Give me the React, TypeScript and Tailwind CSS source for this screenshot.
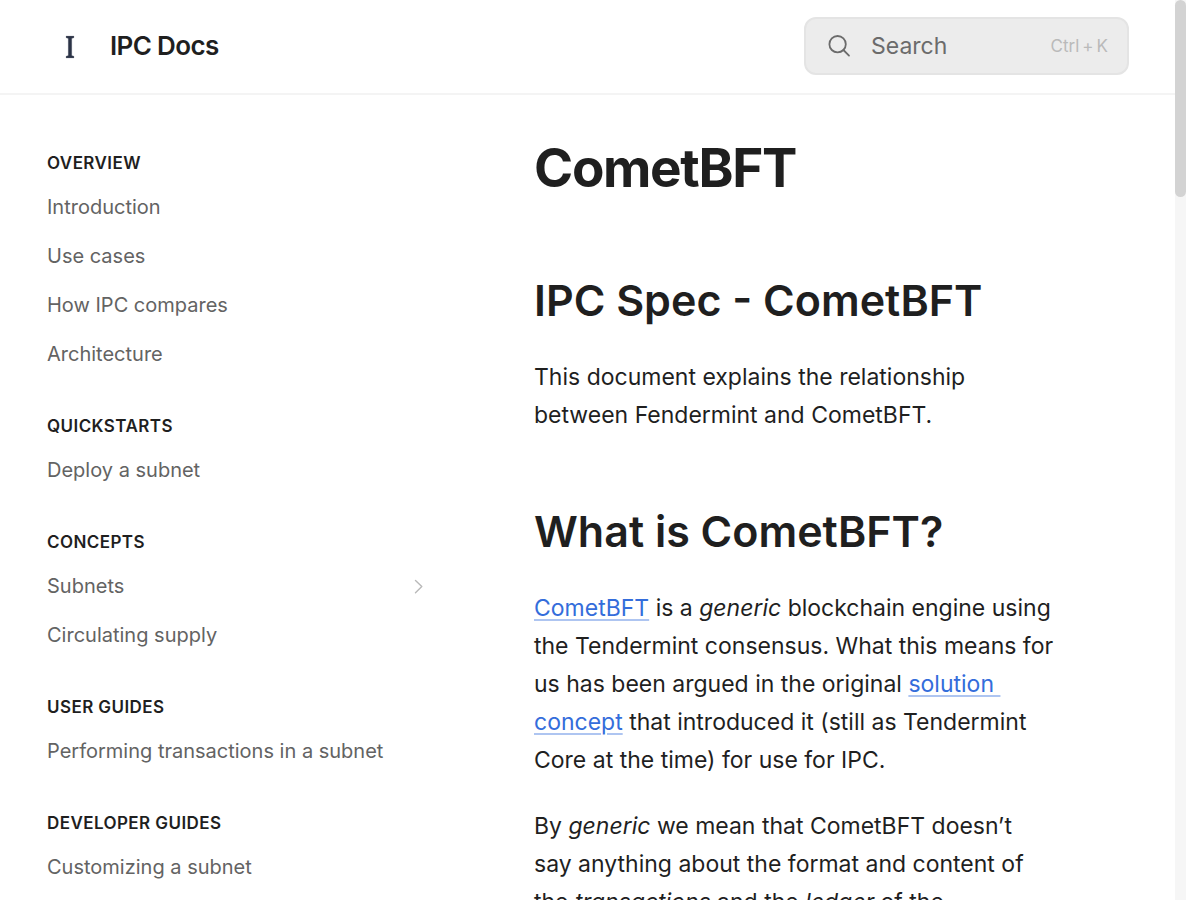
import React from "react";

type NavItem = { label: string; expandable?: boolean };
type NavGroup = { title: string; items: NavItem[] };

const groups: NavGroup[] = [
  {
    title: "Overview",
    items: [
      { label: "Introduction" },
      { label: "Use cases" },
      { label: "How IPC compares" },
      { label: "Architecture" },
    ],
  },
  { title: "Quickstarts", items: [{ label: "Deploy a subnet" }] },
  {
    title: "Concepts",
    items: [{ label: "Subnets", expandable: true }, { label: "Circulating supply" }],
  },
  { title: "User guides", items: [{ label: "Performing transactions in a subnet" }] },
  { title: "Developer guides", items: [{ label: "Customizing a subnet" }] },
];

function Logo() {
  return (
    <svg viewBox="0 0 46 46" className="size-[46px]" aria-hidden="true">
      <path
        d="M19 13h8v1.8l-2.2.6v17.2l2.2.6V35h-8v-1.8l2.2-.6V15.4l-2.2-.6z"
        fill="#2b3346"
        stroke="#8b8f99"
        strokeOpacity="0.35"
        strokeWidth="0.8"
      />
    </svg>
  );
}

function SearchIcon() {
  return (
    <svg viewBox="0 0 24 24" className="size-6" fill="none" stroke="#6b6b6b" strokeWidth="1.8" aria-hidden="true">
      <circle cx="10.6" cy="10.2" r="8.2" />
      <path d="M16.4 16l5.6 5.6" strokeLinecap="round" />
    </svg>
  );
}

function Chevron() {
  return (
    <svg viewBox="0 0 16 16" className="size-4" fill="none" stroke="#b9b9b9" strokeWidth="1.4" aria-hidden="true">
      <path d="M4.5 1.4 10.8 7.6l-6.3 6.2" strokeLinecap="round" strokeLinejoin="round" />
    </svg>
  );
}

function Header() {
  return (
    <header className="flex h-[95px] shrink-0 items-center justify-between border-b-2 border-[#f4f4f4] pr-[46px] pb-0.5 pl-[47px]">
      <a href="#" className="flex items-center gap-[17px] text-[26px] leading-8 font-semibold tracking-tight">
        <Logo />
        IPC Docs
      </a>
      <button
        type="button"
        className="flex h-[58px] w-[325px] items-center rounded-xl border-2 border-[#e4e4e4] bg-[#ececec] pr-[19px] pl-[21px] text-left"
      >
        <SearchIcon />
        <span className="ml-5 flex-1 text-[23px] leading-8 text-[#6b6b6b]">Search</span>
        <span className="flex gap-[3px] text-[17px] leading-6 text-[#bababa]">
          <span>Ctrl</span>
          <span>+</span>
          <span>K</span>
        </span>
      </button>
    </header>
  );
}

function Sidebar() {
  return (
    <nav aria-label="Documentation" className="flex w-[396px] shrink-0 flex-col gap-[30px] pt-[51px]">
      {groups.map((group) => (
        <section key={group.title}>
          <h2 className="mb-[3px] text-[17px] leading-[34px] font-semibold tracking-wide uppercase">{group.title}</h2>
          <ul>
            {group.items.map((item) => (
              <li key={item.label}>
                <a href="#" className="flex items-center justify-between py-[9px] pr-4 text-[20px] leading-[31px] text-[#636363]">
                  {item.label}
                  {item.expandable && <Chevron />}
                </a>
              </li>
            ))}
          </ul>
        </section>
      ))}
    </nav>
  );
}

function TextLink({ children }: { children: React.ReactNode }) {
  return (
    <a
      href="#"
      className="text-[#346ddb] underline decoration-[#aec5f1] decoration-2 underline-offset-[3px]"
    >
      {children}
    </a>
  );
}

function Article() {
  return (
    <main className="min-w-0 flex-1 pt-[43px] pr-[70px] pl-[91px] text-[23px] leading-[38px]">
      <h1 className="text-[53px] leading-[60px] font-bold tracking-tight">CometBFT</h1>
      <h2 className="mt-[74px] text-[43px] leading-[56px] font-semibold">IPC Spec - CometBFT</h2>
      <p className="mt-[30px]">This document explains the relationship between Fendermint and CometBFT.</p>
      <h2 className="mt-[69px] text-[43px] leading-[56px] font-semibold">What is CometBFT?</h2>
      <p className="mt-[30px]">
        <TextLink>CometBFT</TextLink> is a <em>generic</em> blockchain engine using the Tendermint
        consensus. What this means for us has been argued in the original{" "}
        <TextLink>{"solution\u00a0 concept"}</TextLink> that introduced it (still as Tendermint Core
        at the time) for use for IPC.
      </p>
      <p className="mt-7">
        By <em>generic</em> we mean that CometBFT doesn’t {"say\u00a0anything"} about the format and
        content of the <em>transactions</em> and the <em>ledger</em> of the
      </p>
    </main>
  );
}

export default function App() {
  return (
    <div className="flex h-screen overflow-hidden bg-white font-['Inter',sans-serif] text-[#1f1f1f]">
      <div className="flex min-w-0 flex-1 flex-col">
        <Header />
        <div className="flex min-h-0 flex-1 overflow-hidden pr-[46px] pl-[47px]">
          <Sidebar />
          <Article />
        </div>
      </div>
      <div className="w-[11px] shrink-0 bg-[#f6f6f6]" aria-hidden="true">
        <div className="h-[197px] rounded-full bg-[#d3d3d3]" />
      </div>
    </div>
  );
}
